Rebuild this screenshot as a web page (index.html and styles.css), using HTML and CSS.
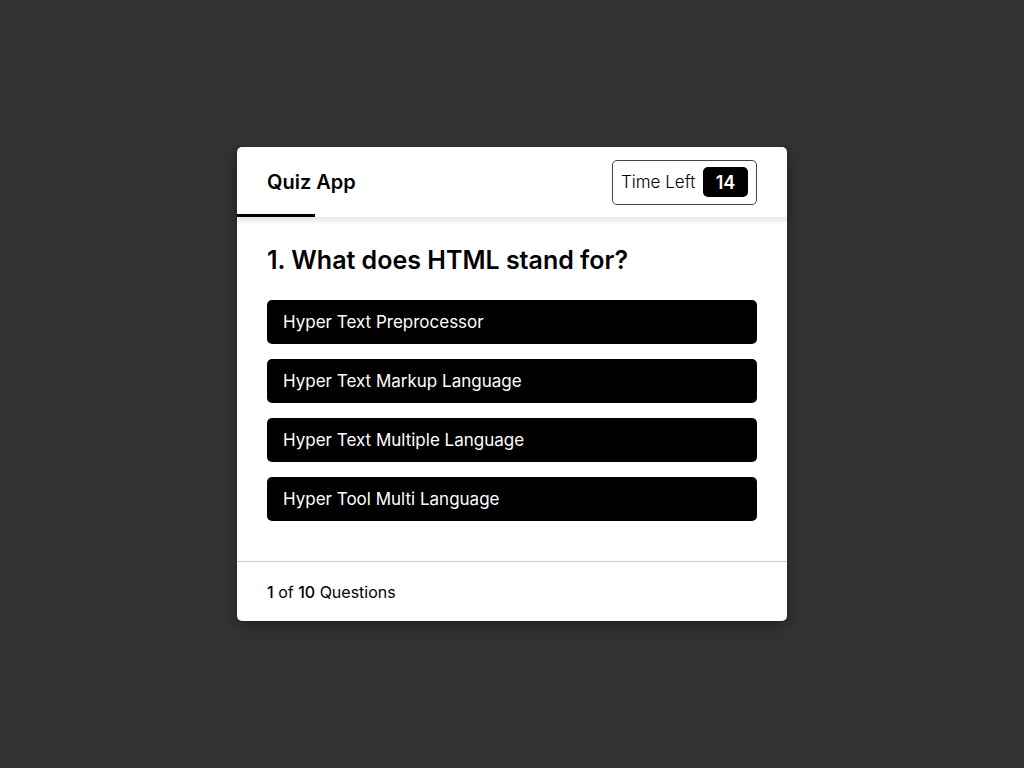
FILE: index.html
```html
<!DOCTYPE html>
<html lang="en">
<head>
    <meta charset="UTF-8">
    <meta name="viewport" content="width=device-width, initial-scale=1.0">
    <title>Quiz App</title>
    <link rel="stylesheet" href="styles.css">
</head>
<body>
    <div class="quiz-box">
        <header>
            <div class="title">Quiz App</div>
            <div class="timer">
                <div class="time-text">Time Left</div>
                <div class="timer-sec">14</div>
            </div>
        </header>
        <section>
            <div class="que-text">1. What does HTML stand for?</div>
            <div class="option-list">
                <div class="option">Hyper Text Preprocessor</div>
                <div class="option">Hyper Text Markup Language</div>
                <div class="option">Hyper Text Multiple Language</div>
                <div class="option">Hyper Tool Multi Language</div>
            </div>
        </section>
        <footer>
            <div class="total-que"><b>1</b> of <b>10</b> Questions</div>
        </footer>
    </div>
</body>
</html>
```
FILE: styles.css
```css
* {
    margin: 0;
    padding: 0;
    box-sizing: border-box;
}
body {
    font-family: "Inter", "Open Sans", sans-serif;
    background: #333333;
    height: 100vh;
    display: flex;
    align-items: center;
    justify-content: center;
    color: #000;
}
.quiz-box {
    width: 550px;
    background: #fff;
    border-radius: 5px;
    box-shadow: 0 4px 8px 0 rgba(0, 0, 0, 0.2), 0 6px 20px 0 rgba(0, 0, 0, 0.19);
}
header {
    position: relative;
    height: 70px;
    padding: 0 30px;
    display: flex;
    align-items: center;
    justify-content: space-between;
    box-shadow: 0 3px 5px 1px rgba(0, 0, 0, 0.1);
    border-radius: 5px 5px 0 0;
}
header::after {
    content: "";
    position: absolute;
    left: 0;
    bottom: 0;
    width: 78px;
    height: 3px;
    background: #000;
}
.title {
    font-size: 20px;
    font-weight: 600;
}
.timer {
    height: 45px;
    width: 145px;
    padding: 0 8px;
    border: 1px solid #444;
    border-radius: 5px;
    display: flex;
    align-items: center;
    justify-content: space-between;
}
.time-text {
    font-size: 17px;
    font-weight: 300;
}
.timer-sec {
    height: 30px;
    width: 45px;
    background: #000;
    color: #fff;
    border-radius: 5px;
    font-size: 18px;
    font-weight: 600;
    display: flex;
    align-items: center;
    justify-content: center;
}
section {
    padding: 28px 30px 40px;
}
.que-text {
    font-size: 25px;
    font-weight: 600;
    line-height: 30px;
}
.option-list {
    padding-top: 25px;
    display: flex;
    flex-direction: column;
    gap: 15px;
}
.option {
    height: 44px;
    background: #000;
    color: #fff;
    border-radius: 5px;
    padding: 0 16px;
    font-size: 17px;
    display: flex;
    align-items: center;
}
footer {
    height: 60px;
    padding: 0 30px;
    border-top: 1px solid #ccc;
    display: flex;
    align-items: center;
}
.total-que {
    font-size: 16px;
    font-weight: 400;
}
.total-que b {
    font-weight: 500;
}
```
